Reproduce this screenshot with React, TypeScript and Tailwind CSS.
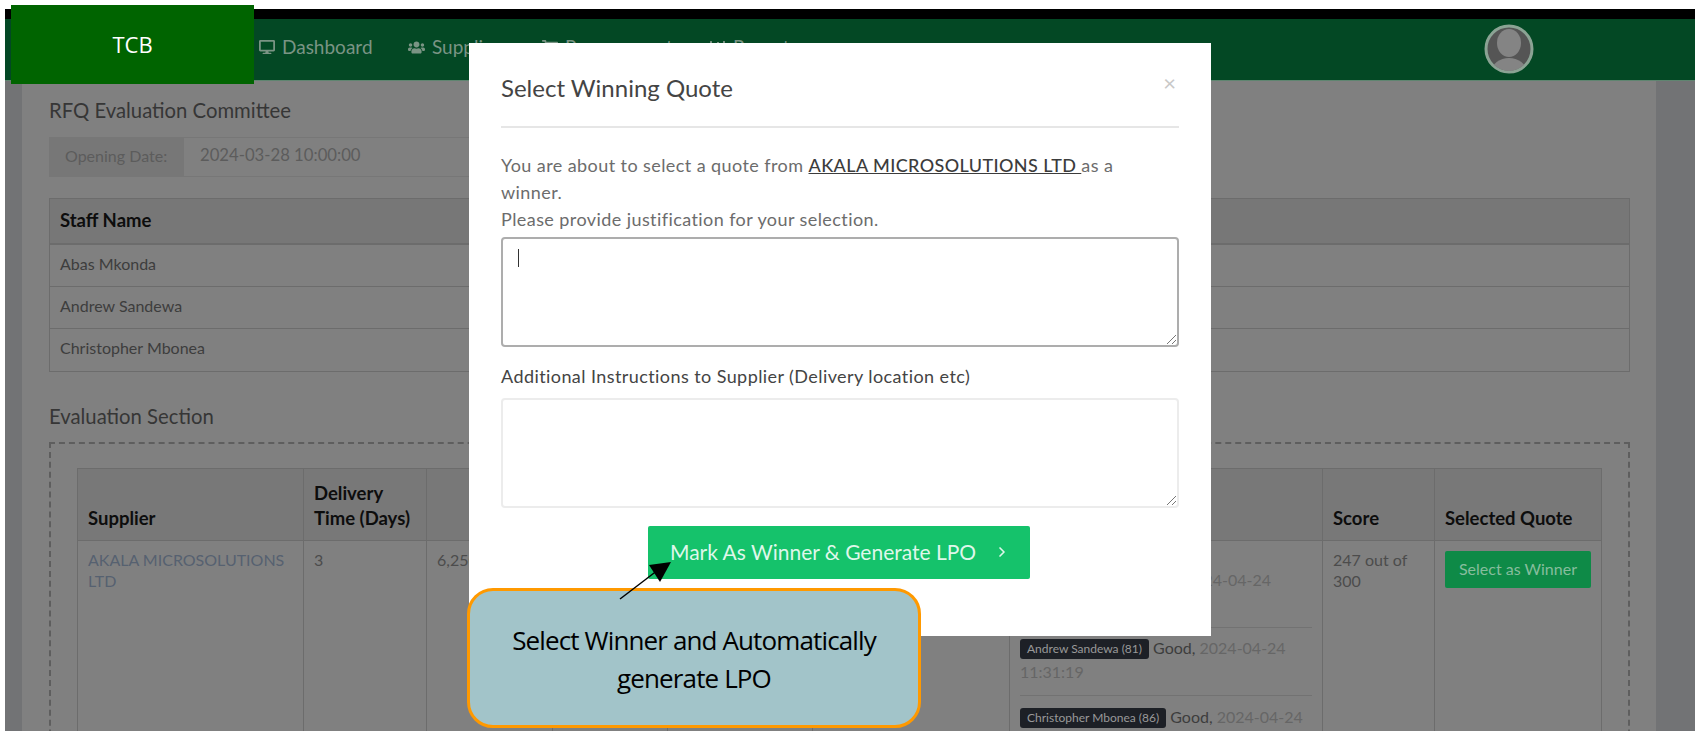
import { ChevronRight } from 'lucide-react';
import { FaDesktop, FaUsers, FaShoppingCart, FaChartBar } from 'react-icons/fa';

const committee = ['Abas Mkonda', 'Andrew Sandewa', 'Christopher Mbonea'];

function NavItem({ icon, label, className }: { icon: React.ReactNode; label: string; className: string }) {
  return (
    <div className={`flex items-center gap-[7px] text-[19px] leading-[24px] text-[#7a9484] ${className}`}>
      {icon}
      <span>{label}</span>
    </div>
  );
}

function Comment({ name, rest, wrap }: { name: string; rest: string; wrap?: string }) {
  return (
    <div className="whitespace-nowrap text-[16px] leading-[30px] text-[#666]">
      <span className="inline-block h-[20px] rounded-[3px] bg-[#1d2026] px-[7px] align-[1px] text-[12px] leading-[20px] text-[#999]">
        {name}
      </span>{' '}
      <span className="text-[#3d3d3d]">Good,</span> {rest}
      {wrap && <div className="-mt-[6px] text-[#666]">{wrap}</div>}
    </div>
  );
}

export default function App() {
  return (
    <div className="relative h-[748px] w-[1707px] overflow-hidden bg-white font-['Lato','Liberation_Sans',sans-serif]">
      <div className="ml-[5px] mt-[9px] flex h-[722px] w-[1690px] flex-col overflow-hidden">
        <div className="h-[10px] shrink-0 bg-black" />

        {/* nav */}
        <div className="relative h-[62px] shrink-0 border-b border-[#5f8570] bg-[#034824]">
          <NavItem icon={<FaDesktop size={16} />} label="Dashboard" className="absolute left-[254px] top-[16px]" />
          <NavItem icon={<FaUsers size={17} />} label="Suppliers" className="absolute left-[403px] top-[16px]" />
          <NavItem icon={<FaShoppingCart size={16} />} label="Procurement" className="absolute left-[537px] top-[16px]" />
          <NavItem icon={<FaChartBar size={16} />} label="Reports" className="absolute left-[705px] top-[16px]" />
          <svg className="absolute left-[1479px] top-[5px]" width="50" height="50" viewBox="0 0 50 50">
            <defs>
              <clipPath id="avatar-clip">
                <circle cx="25" cy="25" r="22" />
              </clipPath>
            </defs>
            <circle cx="25" cy="25" r="23" fill="#555" stroke="#8ba394" strokeWidth="3" />
            <g clipPath="url(#avatar-clip)">
              <ellipse cx="25" cy="19" rx="12" ry="14" fill="#848484" />
              <ellipse cx="25" cy="47" rx="17" ry="13" fill="#848484" />
            </g>
          </svg>
        </div>

        <div className="flex min-h-0 flex-1">
          <div className="w-[17px] shrink-0 bg-[#727375]" />

          <div className="min-w-0 flex-1 bg-[#808080] pl-[27px] pr-[26px] pt-[16px]">
            <h3 className="text-[20.3px] leading-[26px] text-[#363636]">RFQ Evaluation Committee</h3>

            <div className="mt-[14px] flex h-[40px] text-[16px] text-[#5c5c5c]">
              <div className="flex w-[134px] items-center bg-[#777] pb-[2px] pl-[16px]">Opening Date:</div>
              <div className="flex w-[500px] items-center border border-[#777] pb-[2px] pl-[16px] text-[16.7px]">2024-03-28 10:00:00</div>
            </div>

            <div className="mt-[21px] border border-[#6c6c6c]">
              <div className="flex h-[46px] items-center border-b-2 border-[#6c6c6c] bg-[#777] pl-[10px] text-[18.5px] font-bold text-[#0d0d0d]">
                Staff Name
              </div>
              {committee.map((name, i) => (
                <div
                  key={name}
                  className={`flex h-[42px] items-center pb-[4px] pl-[10px] text-[16px] text-[#3d3d3d] ${i < 2 ? 'border-b border-[#6c6c6c]' : ''}`}
                >
                  {name}
                </div>
              ))}
            </div>

            <h3 className="mt-[31px] text-[20.3px] leading-[26px] text-[#363636]">Evaluation Section</h3>

            <div className="mt-[13px] border-2 border-b-0 border-dashed border-[#5e5e5e] pl-[26px] pr-[27px] pt-[24px]">
              <table className="w-[1524px] table-fixed border-collapse text-[16px] text-[#4c4c4c]">
                <colgroup>
                  <col className="w-[226px]" />
                  <col className="w-[123px]" />
                  <col className="w-[126px]" />
                  <col className="w-[115px]" />
                  <col className="w-[145px]" />
                  <col className="w-[197px]" />
                  <col className="w-[313px]" />
                  <col className="w-[112px]" />
                  <col className="w-[167px]" />
                </colgroup>
                <thead>
                  <tr className="h-[72px] bg-[#787878] text-left align-bottom text-[18.5px] font-bold leading-[25px] text-[#0d0d0d]">
                    <th className="border border-[#6c6c6c] px-[10px] pb-[9px]">Supplier</th>
                    <th className="border border-[#6c6c6c] px-[10px] pb-[9px]">Delivery Time (Days)</th>
                    <th className="border border-[#6c6c6c]" />
                    <th className="border border-[#6c6c6c]" />
                    <th className="border border-[#6c6c6c]" />
                    <th className="border border-[#6c6c6c]" />
                    <th className="border border-[#6c6c6c]" />
                    <th className="border border-[#6c6c6c] px-[10px] pb-[9px]">Score</th>
                    <th className="whitespace-nowrap border border-[#6c6c6c] px-[10px] pb-[9px]">Selected Quote</th>
                  </tr>
                </thead>
                <tbody>
                  <tr className="align-top leading-[21px]">
                    <td className="border border-[#6c6c6c] px-[10px] pt-[8px] text-[#566170]">AKALA MICROSOLUTIONS LTD</td>
                    <td className="border border-[#6c6c6c] px-[10px] pt-[8px]">3</td>
                    <td className="border border-[#6c6c6c] px-[10px] pt-[8px]">6,250,000</td>
                    <td className="border border-[#6c6c6c]" />
                    <td className="border border-[#6c6c6c]" />
                    <td className="border border-[#6c6c6c]" />
                    <td className="border border-[#6c6c6c] px-[10px] pt-[24px]">
                      <div className="h-[63px] border-b border-[#727272] text-[16px] leading-[30px] text-[#666]">
                        <span className="ml-[165px] whitespace-nowrap">2024-04-24</span>
                      </div>
                      <div className="h-[68px] border-b border-[#727272] pt-[5px]">
                        <Comment name="Andrew Sandewa (81)" rest="2024-04-24" wrap="11:31:19" />
                      </div>
                      <div className="pt-[6px]">
                        <Comment name="Christopher Mbonea (86)" rest="2024-04-24" />
                      </div>
                    </td>
                    <td className="border border-[#6c6c6c] px-[10px] pt-[8px]">247 out of 300</td>
                    <td className="border border-[#6c6c6c] px-[10px] pt-[10px]">
                      <button className="flex h-[37px] w-[146px] items-center justify-center rounded-[2px] bg-[#0e8a47] pb-[3px] text-[16px] text-[#86bd9d]">
                        Select as Winner
                      </button>
                    </td>
                  </tr>
                  <tr className="h-[300px]">
                    <td colSpan={9} />
                  </tr>
                </tbody>
              </table>
            </div>
          </div>

          <div className="w-[39px] shrink-0 bg-[#727375]" />
        </div>
      </div>

      {/* logo block sits over the nav */}
      <div className="absolute left-[11px] top-[5px] flex h-[79px] w-[243px] items-center justify-center bg-[#006400] font-['Open_Sans',sans-serif] text-[22px] text-white">
        TCB
      </div>

      {/* modal */}
      <div className="absolute left-[469px] top-[43px] h-[593px] w-[742px] bg-white px-[32px]">
        <div className="flex h-[85px] items-start justify-between border-b-2 border-[#e6e6e6]">
          <h4 className="mt-[28px] text-[24px] leading-[34px] text-[#444]">Select Winning Quote</h4>
          <span className="mr-[3px] mt-[26px] text-[22px] leading-[28px] text-[#c8c8c8]">×</span>
        </div>
        <p className="mt-[24px] text-[18px] leading-[27px] tracking-[0.42px] text-[#6c6c6c]">
          You are about to select a quote from{' '}
          <u className="font-medium tracking-[0.4px] text-[#3c3c3c]">AKALA MICROSOLUTIONS LTD </u>
          as a
          <br />
          winner.
          <br />
          Please provide justification for your selection.
        </p>
        <div className="relative mt-[4px] h-[110px] rounded-[4px] border-2 border-[#adadad]">
          <div className="absolute left-[15px] top-[10px] h-[18px] w-px bg-[#333]" />
          <ResizeGrip />
        </div>
        <label className="mt-[17px] block text-[18px] leading-[24px] tracking-[0.42px] text-[#444]">
          Additional Instructions to Supplier (Delivery location etc)
        </label>
        <div className="relative mt-[10px] h-[110px] rounded-[4px] border-2 border-[#ececec]">
          <ResizeGrip />
        </div>
        <div className="mt-[18px] flex justify-center">
          <button className="relative left-[-1px] flex h-[53px] w-[382px] items-center justify-between whitespace-nowrap rounded-[2px] bg-[#15c26b] pb-[2px] pl-[22px] pr-[20px] text-[21px] text-[#dff7ea]">
            Mark As Winner &amp; Generate LPO
            <ChevronRight size={16} strokeWidth={2.5} />
          </button>
        </div>
      </div>

      {/* annotation */}
      <div className="absolute left-[467px] top-[588px] flex h-[140px] w-[454px] flex-col items-center justify-center rounded-[26px] border-[3px] border-[#ff9900] bg-[#a2c4c9] pt-[2px] font-['Open_Sans',sans-serif] text-[26px] leading-[38px] tracking-[-0.87px] text-black">
        <span>Select Winner and Automatically</span>
        <span>generate LPO</span>
      </div>
      <svg className="absolute left-[610px] top-[555px]" width="70" height="50" viewBox="0 0 70 50">
        <line x1="10" y1="44" x2="48" y2="15" stroke="#000" strokeWidth="1.5" />
        <polygon points="61,7 39,10 50,27" fill="#000" />
      </svg>
    </div>
  );
}

function ResizeGrip() {
  return (
    <svg className="absolute bottom-0 right-0" width="12" height="12" viewBox="0 0 12 12">
      <path d="M2 11 L11 2 M7 11 L11 7" stroke="#777" strokeWidth="1" />
    </svg>
  );
}
